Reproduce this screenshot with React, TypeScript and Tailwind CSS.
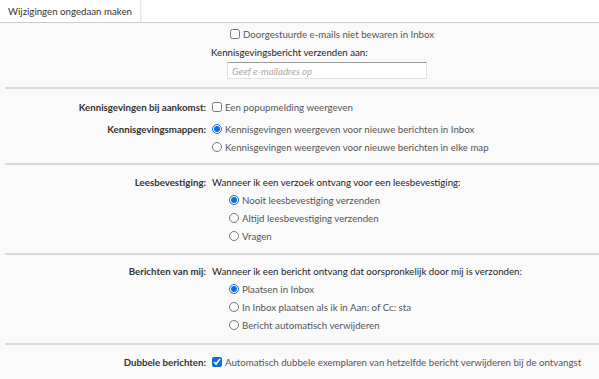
import React from 'react'

const font = { fontFamily: 'Lato, "Open Sans", "Liberation Sans", sans-serif' }

function Check({ checked = false }: { checked?: boolean }) {
  return (
    <input
      type="checkbox"
      defaultChecked={checked}
      className="m-0 w-[10px] h-[10px] accent-[#0b6fe0] shrink-0"
    />
  )
}

function Radio({ checked = false, name }: { checked?: boolean; name: string }) {
  return (
    <input
      type="radio"
      name={name}
      defaultChecked={checked}
      className="m-0 w-[10px] h-[10px] accent-[#0b6fe0] shrink-0"
    />
  )
}

function Row({ label, children, className = '' }: { label?: string; children: React.ReactNode; className?: string }) {
  return (
    <div className={`grid grid-cols-[207px_1fr] h-[18px] items-center ${className}`}>
      <div className="text-right pr-[1px] font-bold text-[#333] whitespace-nowrap">{label}</div>
      <div className="flex items-center gap-[3px] pl-[5px] whitespace-nowrap">{children}</div>
    </div>
  )
}

function Option({ name, checked, text }: { name: string; checked?: boolean; text: string }) {
  return (
    <div className="h-[18px] flex items-center gap-[3px] pl-[229px] text-[#555] whitespace-nowrap">
      <Radio name={name} checked={checked} />
      <span>{text}</span>
    </div>
  )
}

function Divider() {
  return <div className="ml-[5px] border-t-2 border-[#d9d9d9]" />
}

export default function App() {
  return (
    <div className="w-[599px] h-[379px] overflow-hidden bg-[#fafafa] text-[9.7px]" style={font}>
      {/* Tab strip */}
      <div className="bg-white border-b border-[#cfcfcf] h-[23px] flex">
        <div className="h-[22px] px-[8px] flex items-center bg-white border-r border-[#e6e6e6] text-[#333] shadow-[1px_0_2px_rgba(0,0,0,0.06)]">
          Wijzigingen ongedaan maken
        </div>
      </div>

      {/* Forwarding */}
      <div className="pt-[2px] pb-[8px]">
        <div className="h-[18px] flex items-center gap-[3px] pl-[230px] text-[#555] whitespace-nowrap">
          <Check />
          <span>Doorgestuurde e-mails niet bewaren in Inbox</span>
        </div>
        <div className="h-[19px] flex items-center pl-[211px] text-[#222]">
          Kennisgevingsbericht verzenden aan:
        </div>
        <div className="pl-[227px]">
          <input
            type="text"
            placeholder="Geef e-mailadres op"
            className="w-[200px] h-[17px] bg-white border border-[#e2e2e2] border-t-[#9a9a9a] px-[4px] text-[9.7px] italic placeholder:text-[#aaa] outline-none"
            style={font}
          />
        </div>
      </div>
      <Divider />

      {/* Notifications */}
      <div className="pt-[9px] pb-[7px]">
        <Row label="Kennisgevingen bij aankomst:">
          <Check />
          <span className="text-[#555]">Een popupmelding weergeven</span>
        </Row>
        <Row label="Kennisgevingsmappen:" className="mt-[4px]">
          <Radio name="map" checked />
          <span className="text-[#555]">Kennisgevingen weergeven voor nieuwe berichten in Inbox</span>
        </Row>
        <Row>
          <Radio name="map" />
          <span className="text-[#555]">Kennisgevingen weergeven voor nieuwe berichten in elke map</span>
        </Row>
      </div>
      <Divider />

      {/* Read receipts */}
      <div className="pt-[8px] pb-[8px]">
        <Row label="Leesbevestiging:">
          <span className="text-[#222]">Wanneer ik een verzoek ontvang voor een leesbevestiging:</span>
        </Row>
        <Option name="lees" checked text="Nooit leesbevestiging verzenden" />
        <Option name="lees" text="Altijd leesbevestiging verzenden" />
        <Option name="lees" text="Vragen" />
      </div>
      <Divider />

      {/* Own messages */}
      <div className="pt-[7px] pb-[9px]">
        <Row label="Berichten van mij:">
          <span className="text-[#222]">Wanneer ik een bericht ontvang dat oorspronkelijk door mij is verzonden:</span>
        </Row>
        <Option name="mij" checked text="Plaatsen in Inbox" />
        <Option name="mij" text="In Inbox plaatsen als ik in Aan: of Cc: sta" />
        <Option name="mij" text="Bericht automatisch verwijderen" />
      </div>
      <Divider />

      {/* Duplicates */}
      <div className="pt-[8px]">
        <Row label="Dubbele berichten:">
          <Check checked />
          <span className="text-[#555]">Automatisch dubbele exemplaren van hetzelfde bericht verwijderen bij de ontvangst</span>
        </Row>
      </div>
    </div>
  )
}
